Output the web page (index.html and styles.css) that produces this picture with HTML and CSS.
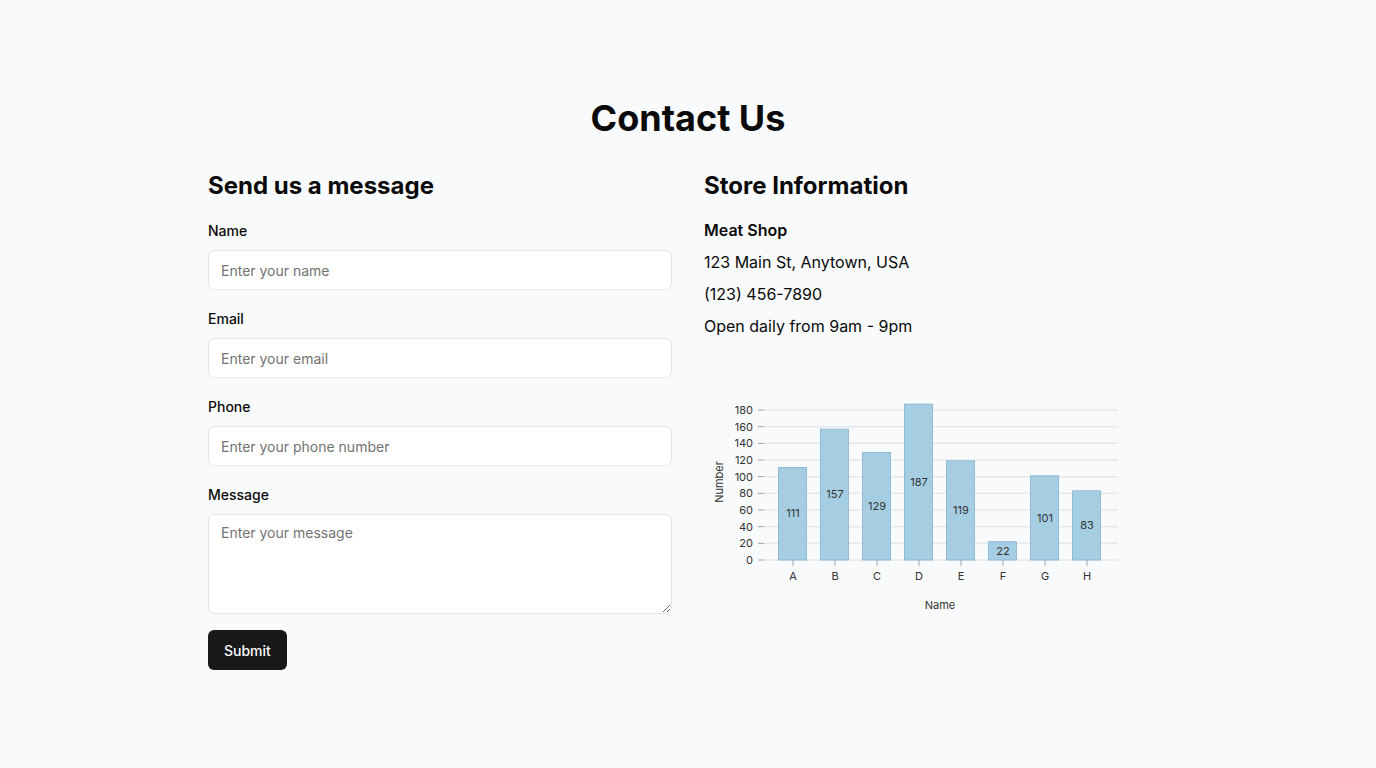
FILE: index.html
```html
<!DOCTYPE html>
<html lang="en">
<head>
<meta charset="utf-8">
<title>Contact Us</title>
<link rel="stylesheet" href="styles.css">
</head>
<body>
<main class="page">
  <h1 class="title">Contact Us</h1>
  <div class="columns">
    <section class="col">
      <h2 class="heading">Send us a message</h2>
      <form class="form">
        <div class="field">
          <label class="label" for="name">Name</label>
          <input class="input" id="name" type="text" placeholder="Enter your name">
        </div>
        <div class="field">
          <label class="label" for="email">Email</label>
          <input class="input" id="email" type="email" placeholder="Enter your email">
        </div>
        <div class="field">
          <label class="label" for="phone">Phone</label>
          <input class="input" id="phone" type="tel" placeholder="Enter your phone number">
        </div>
        <div class="field field-last">
          <label class="label" for="message">Message</label>
          <textarea class="input textarea" id="message" placeholder="Enter your message"></textarea>
        </div>
        <button class="button" type="button">Submit</button>
      </form>
    </section>
    <section class="col">
      <h2 class="heading">Store Information</h2>
      <p class="store-name">Meat Shop</p>
      <p class="info">123 Main St, Anytown, USA</p>
      <p class="info">(123) 456-7890</p>
      <p class="info">Open daily from 9am - 9pm</p>
      <svg class="chart" width="464" height="230" viewBox="0 0 464 230">
        <g class="grid">
          <line x1="60" y1="170" x2="414" y2="170"/>
          <line x1="60" y1="153.33" x2="414" y2="153.33"/>
          <line x1="60" y1="136.67" x2="414" y2="136.67"/>
          <line x1="60" y1="120" x2="414" y2="120"/>
          <line x1="60" y1="103.33" x2="414" y2="103.33"/>
          <line x1="60" y1="86.67" x2="414" y2="86.67"/>
          <line x1="60" y1="70" x2="414" y2="70"/>
          <line x1="60" y1="53.33" x2="414" y2="53.33"/>
          <line x1="60" y1="36.67" x2="414" y2="36.67"/>
          <line x1="60" y1="20" x2="414" y2="20"/>
        </g>
        <g class="ticks">
          <line x1="54" y1="170" x2="60" y2="170"/>
          <line x1="54" y1="153.33" x2="60" y2="153.33"/>
          <line x1="54" y1="136.67" x2="60" y2="136.67"/>
          <line x1="54" y1="120" x2="60" y2="120"/>
          <line x1="54" y1="103.33" x2="60" y2="103.33"/>
          <line x1="54" y1="86.67" x2="60" y2="86.67"/>
          <line x1="54" y1="70" x2="60" y2="70"/>
          <line x1="54" y1="53.33" x2="60" y2="53.33"/>
          <line x1="54" y1="36.67" x2="60" y2="36.67"/>
          <line x1="54" y1="20" x2="60" y2="20"/>
          <line x1="89" y1="170" x2="89" y2="176"/>
          <line x1="131" y1="170" x2="131" y2="176"/>
          <line x1="173" y1="170" x2="173" y2="176"/>
          <line x1="215" y1="170" x2="215" y2="176"/>
          <line x1="257" y1="170" x2="257" y2="176"/>
          <line x1="299" y1="170" x2="299" y2="176"/>
          <line x1="341" y1="170" x2="341" y2="176"/>
          <line x1="383" y1="170" x2="383" y2="176"/>
        </g>
        <g class="ylabels">
          <text x="49" y="174">0</text>
          <text x="49" y="157.33">20</text>
          <text x="49" y="140.67">40</text>
          <text x="49" y="124">60</text>
          <text x="49" y="107.33">80</text>
          <text x="49" y="90.67">100</text>
          <text x="49" y="74">120</text>
          <text x="49" y="57.33">140</text>
          <text x="49" y="40.67">160</text>
          <text x="49" y="24">180</text>
        </g>
        <g class="bars">
          <rect x="74.5" y="77.5" width="28" height="92.5"/>
          <rect x="116.5" y="39.17" width="28" height="130.83"/>
          <rect x="158.5" y="62.5" width="28" height="107.5"/>
          <rect x="200.5" y="14.17" width="28" height="155.83"/>
          <rect x="242.5" y="70.83" width="28" height="99.17"/>
          <rect x="284.5" y="151.67" width="28" height="18.33"/>
          <rect x="326.5" y="85.83" width="28" height="84.17"/>
          <rect x="368.5" y="100.83" width="28" height="69.17"/>
        </g>
        <g class="values">
          <text x="89" y="127">111</text>
          <text x="131" y="108">157</text>
          <text x="173" y="120">129</text>
          <text x="215" y="96">187</text>
          <text x="257" y="124">119</text>
          <text x="299" y="165">22</text>
          <text x="341" y="132">101</text>
          <text x="383" y="139">83</text>
        </g>
        <g class="xlabels">
          <text x="89" y="190">A</text>
          <text x="131" y="190">B</text>
          <text x="173" y="190">C</text>
          <text x="215" y="190">D</text>
          <text x="257" y="190">E</text>
          <text x="299" y="190">F</text>
          <text x="341" y="190">G</text>
          <text x="383" y="190">H</text>
        </g>
        <text class="axis-title" x="236" y="219">Name</text>
        <text class="axis-title" transform="translate(19 92) rotate(-90)">Number</text>
      </svg>
    </section>
  </div>
</main>
</body>
</html>
```

FILE: styles.css
```css
* {
  box-sizing: border-box;
}

body {
  margin: 0;
  background: #f9fafb;
  color: #0a0a0a;
  font-family: Inter, "Noto Sans", "Liberation Sans", sans-serif;
}

.page {
  max-width: 960px;
  margin: 0 auto;
  padding-top: 98px;
}

.title {
  margin: 0 0 32px;
  font-size: 36px;
  line-height: 40px;
  font-weight: 700;
  text-align: center;
}

.columns {
  display: grid;
  grid-template-columns: 1fr 1fr;
  gap: 32px;
}

.heading {
  margin: 0;
  font-size: 24px;
  line-height: 32px;
  font-weight: 700;
}

.form {
  padding-top: 18px;
}

.field {
  display: flex;
  flex-direction: column;
  margin-bottom: 18px;
}

.field-last {
  margin-bottom: 16px;
}

.label {
  font-size: 14px;
  line-height: 20px;
  font-weight: 500;
  padding-top: 1px;
  margin-bottom: 9px;
}

.input {
  height: 40px;
  width: 100%;
  border: 1px solid #e4e4e7;
  border-radius: 6px;
  background: #ffffff;
  padding: 8px 12px;
  font-family: inherit;
  font-size: 14px;
  color: #0a0a0a;
  outline: none;
}

.input::placeholder {
  color: #737373;
}

.textarea {
  height: 100px;
  resize: vertical;
  line-height: 20px;
}

.button {
  height: 40px;
  padding: 0 16px;
  border: none;
  border-radius: 6px;
  background: #18181b;
  color: #fafafa;
  font-family: inherit;
  font-size: 14px;
  font-weight: 500;
}

.store-name {
  margin: 16px 0 8px;
  font-size: 16px;
  line-height: 24px;
  font-weight: 600;
}

.info {
  margin: 0 0 8px;
  font-size: 16px;
  line-height: 24px;
}

.chart {
  display: block;
  margin-top: 52px;
  font-family: Inter, "Noto Sans", "Liberation Sans", sans-serif;
}

.grid line {
  stroke: #e5e7eb;
  stroke-width: 1.5;
}

.ticks line {
  stroke: #9ca3af;
  stroke-width: 1;
}

.ylabels text {
  font-size: 11px;
  fill: #333333;
  text-anchor: end;
}

.bars rect {
  fill: #a6cee3;
  stroke: #8fbcd4;
  stroke-width: 1;
}

.values text,
.xlabels text,
.axis-title {
  font-size: 11px;
  fill: #333333;
  text-anchor: middle;
}
```
